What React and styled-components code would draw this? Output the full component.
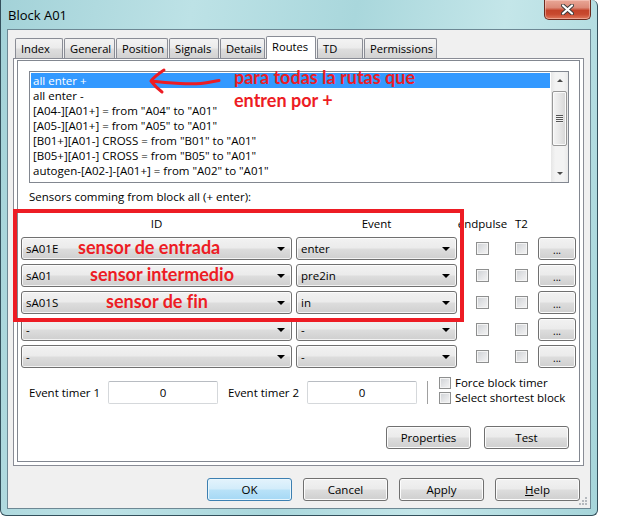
import React from "react";
import styled, { createGlobalStyle, css } from "styled-components";

const GlobalStyle = createGlobalStyle`
  html, body {
    margin: 0;
    padding: 0;
    background: #ffffff;
  }
  body {
    font-family: "Open Sans", "Noto Sans", sans-serif;
    font-size: 11.5px;
    color: #000;
  }
  * {
    box-sizing: border-box;
  }
`;

const Desktop = styled.div`
  width: 642px;
  height: 516px;
  overflow: hidden;
  background: #ffffff;
`;

const Window = styled.div`
  width: 598px;
  height: 516px;
  display: flex;
  flex-direction: column;
  padding: 0 6px 6px 6px;
  border: 1px solid #34505c;
  border-top: none;
  border-radius: 0 6px 6px 6px;
  background: linear-gradient(
    100deg,
    #a3d2d8 0%,
    #bde2e6 28%,
    #a9d7dc 52%,
    #c4e6e9 74%,
    #a6d5da 100%
  );
`;

const TitleBar = styled.div`
  height: 29px;
  display: flex;
  align-items: flex-start;
  flex-shrink: 0;
`;

const Title = styled.div`
  margin-left: 1px;
  padding-top: 1px;
  line-height: 29px;
  font-size: 13px;
  color: #000;
`;

const CloseButton = styled.div`
  margin-left: auto;
  width: 47px;
  height: 20px;
  display: flex;
  align-items: center;
  justify-content: center;
  border: 1px solid #6b2a1e;
  border-top: none;
  border-radius: 0 0 5px 5px;
  background: linear-gradient(
    #e9a797 0%,
    #dc8a78 40%,
    #c4432a 55%,
    #c8492f 75%,
    #e0785c 100%
  );
  box-shadow: inset 0 0 0 1px rgba(255, 220, 210, 0.45);
`;

const Client = styled.div`
  position: relative;
  flex: 1;
  display: flex;
  flex-direction: column;
  padding: 6px 6px 0 5px;
  border: 1px solid #6d8894;
  background: #f0f0f0;
`;

const TabStrip = styled.div`
  height: 22px;
  display: flex;
  align-items: flex-end;
  padding-left: 2px;
  font-size: 11.2px;
`;

const Tab = styled.div`
  width: ${(p) => p.$w}px;
  height: 20px;
  margin-right: 1px;
  padding: 0 0 0 5px;
  display: flex;
  align-items: center;
  border: 1px solid #898c95;
  border-bottom: none;
  border-radius: 2px 2px 0 0;
  background: linear-gradient(#f3f3f3 0%, #ebebeb 48%, #dedede 52%, #d2d2d2 100%);
  white-space: nowrap;

  ${(p) =>
    p.$active &&
    css`
      position: relative;
      z-index: 1;
      height: 23px;
      margin-bottom: -1px;
      padding-bottom: 3px;
      background: #ffffff;
    `}
`;

const Panel = styled.div`
  height: 408px;
  padding: 1px 3px 3px 3px;
  border: 1px solid #898c95;
  background: #ffffff;
`;

const InnerFrame = styled.div`
  position: relative;
  height: 100%;
  display: flex;
  flex-direction: column;
  border: 1px solid #828790;
  background: #ffffff;
`;

const ListBox = styled.div`
  margin: 10px 0 0 11px;
  width: 540px;
  height: 112px;
  display: flex;
  border: 1px solid #828790;
  background: #ffffff;
`;

const ListItems = styled.div`
  flex: 1;
  padding: 1px;
`;

const ListItem = styled.div`
  height: 15px;
  line-height: 15px;
  padding-left: 2px;
  white-space: nowrap;
  color: ${(p) => (p.$selected ? "#ffffff" : "#000000")};
  background: ${(p) => (p.$selected ? "#3399ff" : "transparent")};
`;

const ScrollBar = styled.div`
  width: 17px;
  display: flex;
  flex-direction: column;
  background: linear-gradient(90deg, #e6e6e6, #f3f3f3 25%, #f3f3f3 75%, #e9e9e9);
`;

const ScrollButton = styled.div`
  height: 17px;
  display: flex;
  align-items: center;
  justify-content: center;
  margin-top: ${(p) => (p.$down ? "auto" : "0")};
`;

const ScrollThumb = styled.div`
  height: 55px;
  margin: 2px 1px 0;
  display: flex;
  align-items: center;
  justify-content: center;
  border: 1px solid #979797;
  border-radius: 2px;
  background: linear-gradient(90deg, #f4f4f4 0%, #e8e8e8 45%, #d6d6d6 100%);
  box-shadow: inset 0 0 0 1px #fafafa;
`;

const Gripper = styled.div`
  width: 7px;
  height: 8px;
  background: repeating-linear-gradient(#555 0, #555 1px, #f2f2f2 1px, #f2f2f2 2px);
`;

const Triangle = styled.span`
  width: 0;
  height: 0;
  border-left: ${(p) => p.$size}px solid transparent;
  border-right: ${(p) => p.$size}px solid transparent;
  ${(p) =>
    p.$up
      ? css`
          border-bottom: ${p.$size}px solid ${p.$color};
        `
      : css`
          border-top: ${p.$size}px solid ${p.$color};
        `}
`;

const SectionLabel = styled.div`
  margin: 6px 0 0 11px;
  line-height: 15px;
`;

const SensorGrid = styled.div`
  margin: 12px 0 0 3px;
  display: grid;
  grid-template-columns: 275px 161px 51px 27px 41px;
  grid-auto-rows: 23px;
  grid-template-rows: 17px;
  row-gap: 4px;
  align-items: center;
`;

const HeaderCell = styled.div`
  align-self: start;
  width: ${(p) => (p.$w ? `${p.$w}px` : "auto")};
  line-height: 15px;
  text-align: center;
  white-space: nowrap;
`;

const ComboBox = styled.div`
  position: relative;
  width: ${(p) => p.$w}px;
  height: 23px;
  display: flex;
  align-items: center;
  padding: 0 6px 0 4px;
  border: 1px solid #707070;
  border-radius: 3px;
  background: linear-gradient(#f2f2f2 0%, #ebebeb 48%, #dddddd 52%, #cfcfcf 100%);
  box-shadow: inset 0 0 0 1px rgba(255, 255, 255, 0.75);
`;

const ComboText = styled.span`
  flex: 1;
  white-space: nowrap;
`;

const Note = styled.span`
  position: absolute;
  top: 0;
  left: ${(p) => p.$left}px;
  font-family: Lato, "Open Sans", sans-serif;
  font-weight: 700;
  font-size: 18px;
  line-height: 18px;
  font-variant-ligatures: none;
  color: #ed1c24;
  white-space: nowrap;
`;

const CheckBox = styled.span`
  display: block;
  flex-shrink: 0;
  width: ${(p) => p.$size}px;
  height: ${(p) => p.$size}px;
  border: 1px solid #8e8f8f;
  background: linear-gradient(135deg, #cdd0d4 0%, #e4e5e7 55%, #f4f4f4 100%);
  box-shadow: inset 0 0 0 1px #f4f4f4;
`;

const CheckCell = styled.div`
  display: flex;
  justify-content: center;
`;

const DotsButton = styled.div`
  justify-self: end;
  width: 38px;
  height: 23px;
  display: flex;
  align-items: center;
  justify-content: center;
  padding-top: 3px;
  border: 1px solid #707070;
  border-radius: 3px;
  background: linear-gradient(#f2f2f2 0%, #ebebeb 48%, #dddddd 52%, #cfcfcf 100%);
  box-shadow: inset 0 0 0 1px #fcfcfc;
  font-size: 10px;
`;

const TimerRow = styled.div`
  margin: 13px 0 0 11px;
  height: 23px;
  display: flex;
  align-items: center;
`;

const TimerLabel = styled.div`
  width: 79px;
  margin-left: ${(p) => p.$gap || 0}px;
  white-space: nowrap;
`;

const NumberField = styled.div`
  width: 110px;
  height: 23px;
  display: flex;
  align-items: center;
  justify-content: center;
  border: 1px solid #d5d8db;
  border-top-color: #b8bcc2;
  border-radius: 2px;
  background: #ffffff;
`;

const Separator = styled.div`
  width: 1px;
  height: 23px;
  margin-left: 10px;
  background: #a0a0a0;
`;

const OptionList = styled.div`
  align-self: flex-start;
  margin: -6px 0 0 11px;
  display: flex;
  flex-direction: column;
`;

const Option = styled.div`
  height: 15px;
  display: flex;
  align-items: center;
  gap: 4px;
  white-space: nowrap;
`;

const PanelButtons = styled.div`
  margin: 22px 10px 0 0;
  display: flex;
  justify-content: flex-end;
  gap: 13px;
`;

const Button = styled.div`
  width: 85px;
  height: 23px;
  display: flex;
  align-items: center;
  justify-content: center;
  border: 1px solid #707070;
  border-radius: 3px;
  background: linear-gradient(#f2f2f2 0%, #ebebeb 48%, #dddddd 52%, #cfcfcf 100%);
  box-shadow: inset 0 0 0 1px #fcfcfc;
  color: #000;

  ${(p) =>
    p.$default &&
    css`
      border-color: #3c7fb1;
      background: linear-gradient(#e3f3fc 0%, #d2ecfa 48%, #b9e2f8 52%, #a5d8f5 100%);
      box-shadow: inset 0 0 0 1px #e8f6fd;
    `}
`;

const DialogButtons = styled.div`
  margin: 12px 4px 0 0;
  display: flex;
  justify-content: flex-end;
  gap: 11px;
`;

const Highlight = styled.div`
  position: absolute;
  left: -5px;
  top: 148px;
  width: 451px;
  height: 113px;
  border: 4px solid #ed1c24;
  pointer-events: none;
`;

const ListNote = styled.div`
  position: absolute;
  left: 216px;
  top: 5px;
  font-family: Lato, "Open Sans", sans-serif;
  font-weight: 700;
  font-size: 18px;
  line-height: 23px;
  font-variant-ligatures: none;
  color: #ed1c24;
  white-space: nowrap;
`;

const ArrowMark = styled.svg`
  position: absolute;
  left: 130px;
  top: 7px;
  overflow: visible;
`;

const SizeGrip = styled.svg`
  position: absolute;
  right: 2px;
  bottom: 2px;
`;

const tabs = [
  { label: "Index", w: 48 },
  { label: "General", w: 51 },
  { label: "Position", w: 52 },
  { label: "Signals", w: 50 },
  { label: "Details", w: 45 },
  { label: "Routes", w: 50, active: true },
  { label: "TD", w: 46 },
  { label: "Permissions", w: 73 },
];

const routes = [
  "all enter +",
  "all enter -",
  '[A04-][A01+] = from "A04" to "A01"',
  '[A05-][A01+] = from "A05" to "A01"',
  '[B01+][A01-] CROSS = from "B01" to "A01"',
  '[B05+][A01-] CROSS = from "B05" to "A01"',
  'autogen-[A02-]-[A01+] = from "A02" to "A01"',
];

const sensors = [
  { id: "sA01E", event: "enter", note: "sensor de entrada", left: 56 },
  { id: "sA01", event: "pre2in", note: "sensor intermedio", left: 68 },
  { id: "sA01S", event: "in", note: "sensor de fin", left: 84 },
  { id: "-", event: "-" },
  { id: "-", event: "-" },
];

function Combo({ w, value, note, left }) {
  return (
    <ComboBox $w={w}>
      <ComboText>{value}</ComboText>
      <Triangle $size={4} $color="#000" />
      {note && <Note $left={left}>{note}</Note>}
    </ComboBox>
  );
}

export default function App() {
  return (
    <Desktop>
      <GlobalStyle />
      <Window>
        <TitleBar>
          <Title>Block A01</Title>
          <CloseButton>
            <svg width="13" height="11" viewBox="0 0 13 11">
              <path
                d="M2 1.5 L11 9.5 M11 1.5 L2 9.5"
                stroke="#3a3a3a"
                strokeWidth="4"
                strokeLinecap="round"
              />
              <path
                d="M2 1.5 L11 9.5 M11 1.5 L2 9.5"
                stroke="#ffffff"
                strokeWidth="2.2"
                strokeLinecap="round"
              />
            </svg>
          </CloseButton>
        </TitleBar>

        <Client>
          <TabStrip>
            {tabs.map((t) => (
              <Tab key={t.label} $w={t.w} $active={t.active}>
                {t.label}
              </Tab>
            ))}
          </TabStrip>

          <Panel>
            <InnerFrame>
              <ListBox>
                <ListItems>
                  {routes.map((r, i) => (
                    <ListItem key={r} $selected={i === 0}>
                      {r}
                    </ListItem>
                  ))}
                </ListItems>
                <ScrollBar>
                  <ScrollButton>
                    <Triangle $up $size={3} $color="#4a4a4a" />
                  </ScrollButton>
                  <ScrollThumb>
                    <Gripper />
                  </ScrollThumb>
                  <ScrollButton $down>
                    <Triangle $size={3} $color="#4a4a4a" />
                  </ScrollButton>
                </ScrollBar>
              </ListBox>

              <SectionLabel>Sensors comming from block all (+ enter):</SectionLabel>

              <SensorGrid>
                <HeaderCell $w={271}>ID</HeaderCell>
                <HeaderCell>Event</HeaderCell>
                <HeaderCell>endpulse</HeaderCell>
                <HeaderCell>T2</HeaderCell>
                <div />
                {sensors.map((s, i) => (
                  <React.Fragment key={i}>
                    <Combo w={271} value={s.id} note={s.note} left={s.left} />
                    <Combo w={161} value={s.event} />
                    <CheckCell>
                      <CheckBox $size={13} />
                    </CheckCell>
                    <CheckCell>
                      <CheckBox $size={13} />
                    </CheckCell>
                    <DotsButton>...</DotsButton>
                  </React.Fragment>
                ))}
              </SensorGrid>

              <TimerRow>
                <TimerLabel>Event timer 1</TimerLabel>
                <NumberField>0</NumberField>
                <TimerLabel $gap={10}>Event timer 2</TimerLabel>
                <NumberField>0</NumberField>
                <Separator />
                <OptionList>
                  <Option>
                    <CheckBox $size={12} />
                    Force block timer
                  </Option>
                  <Option>
                    <CheckBox $size={12} />
                    Select shortest block
                  </Option>
                </OptionList>
              </TimerRow>

              <PanelButtons>
                <Button>Properties</Button>
                <Button>Test</Button>
              </PanelButtons>

              <ListNote>
                para todas la rutas que
                <br />
                entren por +
              </ListNote>
              <ArrowMark width="74" height="28" viewBox="0 0 74 28">
                <path
                  d="M16 2 C10 6 6 9 3 13 C6 17 10 21 14 24 M3 13 C10 14 18 15 32 15.5 C44 16 54 15.8 60 14.5 C64 13.6 68 13 71 12.5"
                  fill="none"
                  stroke="#ed1c24"
                  strokeWidth="3"
                  strokeLinecap="round"
                  strokeLinejoin="round"
                />
              </ArrowMark>
              <Highlight />
            </InnerFrame>
          </Panel>

          <DialogButtons>
            <Button $default>OK</Button>
            <Button>Cancel</Button>
            <Button>Apply</Button>
            <Button>
              <span>
                <u>H</u>elp
              </span>
            </Button>
          </DialogButtons>

          <SizeGrip width="10" height="10" viewBox="0 0 10 10">
            {[
              [8, 2],
              [8, 5],
              [5, 5],
              [8, 8],
              [5, 8],
              [2, 8],
            ].map(([x, y]) => (
              <rect key={`${x}-${y}`} x={x - 1} y={y - 1} width="2" height="2" fill="#b5b9be" />
            ))}
          </SizeGrip>
        </Client>
      </Window>
    </Desktop>
  );
}
